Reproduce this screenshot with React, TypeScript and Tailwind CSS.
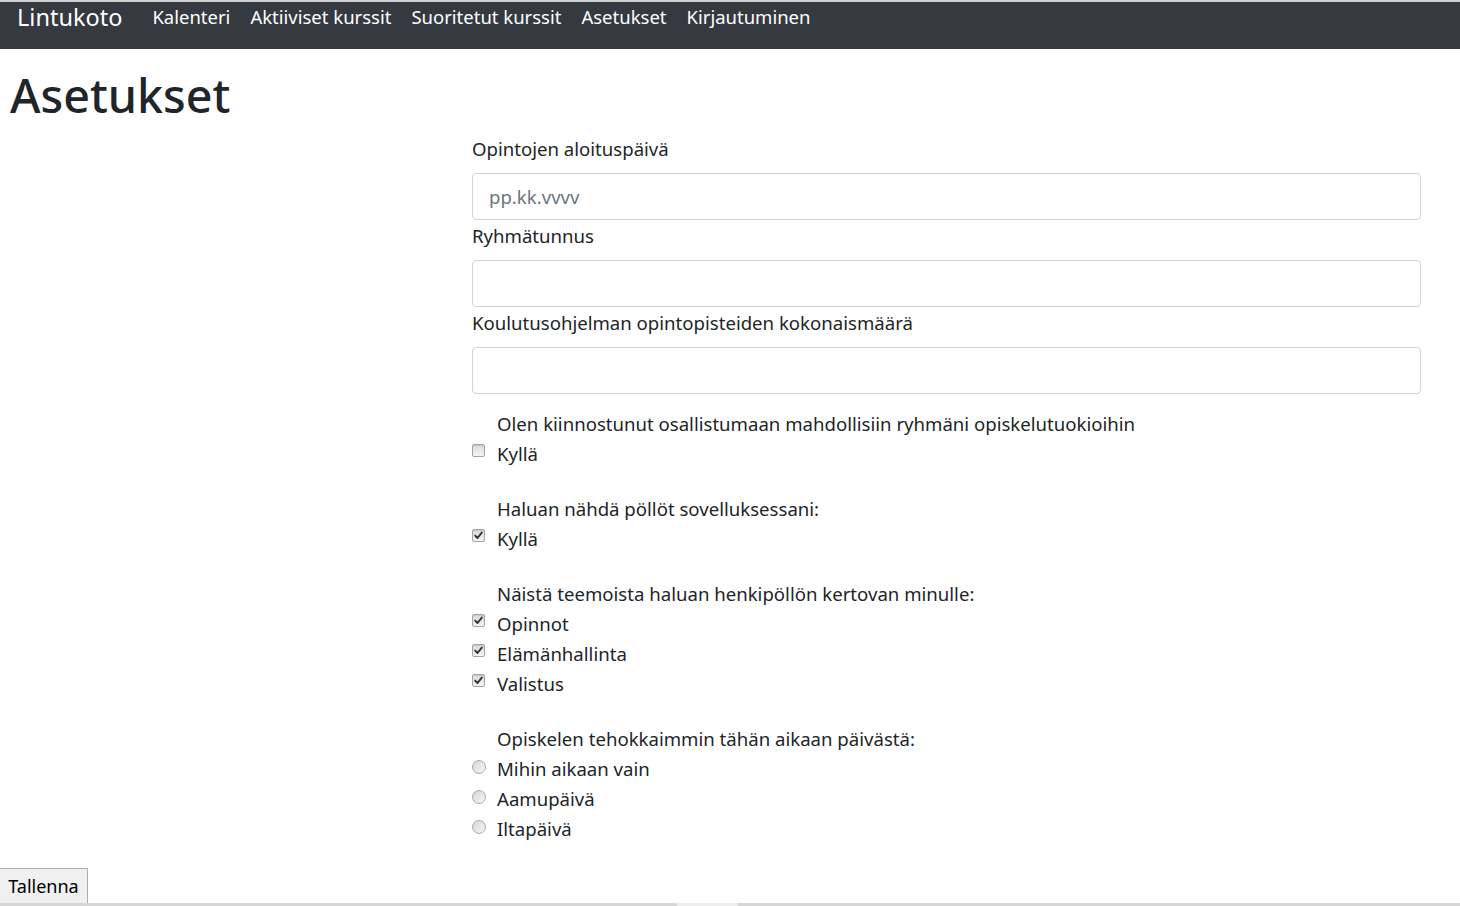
import React from "react";

function Check({ checked }: { checked?: boolean }) {
  return (
    <span className="mt-[5px] flex h-[13px] w-[13px] shrink-0 items-center justify-center rounded-[2px] border border-[#a3a3a3] bg-gradient-to-b from-[#d9d9d9] to-[#f5f5f5] shadow-[inset_0_1px_1px_rgba(0,0,0,0.08)]">
      {checked && (
        <svg width="9" height="9" viewBox="0 0 9 9">
          <path d="M1.2 4.6 L3.5 7 L7.8 1.6" fill="none" stroke="#333" strokeWidth="1.9" strokeLinecap="round" strokeLinejoin="round" />
        </svg>
      )}
    </span>
  );
}

function Radio() {
  return (
    <span className="mt-[6px] h-[14px] w-[14px] shrink-0 rounded-full border border-[#a8a8a8] bg-gradient-to-br from-[#d6d6d6] to-[#f7f7f7]" />
  );
}

function Row({ children, control }: { children: React.ReactNode; control?: React.ReactNode }) {
  return (
    <div className="flex h-[30px] items-start leading-[30px]">
      <span className="flex w-[25px] shrink-0">{control}</span>
      <span>{children}</span>
    </div>
  );
}

function Field({ label, placeholder, first }: { label: string; placeholder?: string; first?: boolean }) {
  return (
    <div className={first ? "" : "mt-[1px]"}>
      <div className="h-[30px] leading-[30px]">{label}</div>
      <div className="mt-[9px] flex h-[47px] items-center rounded-[4px] border border-[#ced4da] bg-white px-[16px] text-[#6c757d]">
        {placeholder}
      </div>
    </div>
  );
}

export default function App() {
  const links = ["Kalenteri", "Aktiiviset kurssit", "Suoritetut kurssit", "Asetukset", "Kirjautuminen"];
  return (
    <div className="relative flex h-[906px] w-full flex-col overflow-hidden bg-white font-['Noto_Sans',sans-serif] text-[18.6px] text-[#212529]">
      <div className="h-[2px] shrink-0 bg-[#cdcfd1]" />
      <nav className="flex h-[47px] shrink-0 items-start bg-[#343a40] pl-[17px] text-white">
        <span className="text-[23.5px] leading-[30px]">Lintukoto</span>
        <ul className="ml-[30px] flex gap-[20px] pt-[1px] text-[18.5px] leading-[28px]">
          {links.map((l) => (
            <li key={l}>{l}</li>
          ))}
        </ul>
      </nav>
      <h1 className="mt-[16px] h-[60px] pl-[10px] text-[46.6px] font-medium leading-[60px]">Asetukset</h1>
      <form className="mt-[9px] pl-[472px] pr-[39px]">
        <Field label="Opintojen aloituspäivä" placeholder="pp.kk.vvvv" first />
        <Field label="Ryhmätunnus" />
        <Field label="Koulutusohjelman opintopisteiden kokonaismäärä" />

        <div className="mt-[15px]">
          <Row>Olen kiinnostunut osallistumaan mahdollisiin ryhmäni opiskelutuokioihin</Row>
          <Row control={<Check />}>Kyllä</Row>
        </div>
        <div className="mt-[25px]">
          <Row>Haluan nähdä pöllöt sovelluksessani:</Row>
          <Row control={<Check checked />}>Kyllä</Row>
        </div>
        <div className="mt-[25px]">
          <Row>Näistä teemoista haluan henkipöllön kertovan minulle:</Row>
          <Row control={<Check checked />}>Opinnot</Row>
          <Row control={<Check checked />}>Elämänhallinta</Row>
          <Row control={<Check checked />}>Valistus</Row>
        </div>
        <div className="mt-[25px]">
          <Row>Opiskelen tehokkaimmin tähän aikaan päivästä:</Row>
          <Row control={<Radio />}>Mihin aikaan vain</Row>
          <Row control={<Radio />}>Aamupäivä</Row>
          <Row control={<Radio />}>Iltapäivä</Row>
        </div>
      </form>
      <div className="mt-[24px]">
        <button className="h-[38px] w-[88px] border border-l-0 border-[#adadad] bg-[#f0f0f0] pb-[2px] text-[18px] leading-[34px] text-black">
          Tallenna
        </button>
      </div>
      <div className="absolute bottom-0 left-0 right-0 flex h-[3px] bg-[#d6d6d6]">
        <div className="ml-[677px] h-full w-[61px] bg-[#ededed]" />
      </div>
    </div>
  );
}
